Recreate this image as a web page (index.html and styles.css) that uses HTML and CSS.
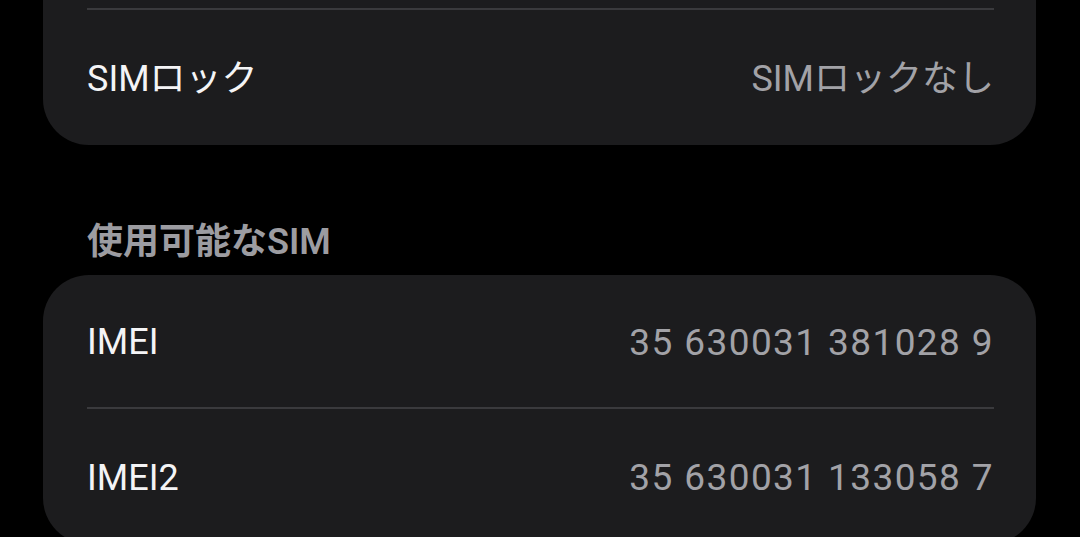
FILE: index.html
```html
<!DOCTYPE html>
<html>

<head>
    <title>SIM</title>
    <meta charset="utf-8" />
    <link rel="stylesheet" href="styles.css">
</head>

<body>
    <div class="page">
        <div class="card card-top">
            <div class="row row-split">
                <span class="label">SIMロック</span>
                <span class="value">SIMロックなし</span>
            </div>
        </div>

        <div class="section-title">使用可能なSIM</div>

        <div class="card">
            <div class="row">
                <span class="label">IMEI</span>
                <span class="value num">35 630031 381028 9</span>
            </div>
            <div class="row row-split">
                <span class="label">IMEI2</span>
                <span class="value num">35 630031 133058 7</span>
            </div>
        </div>
    </div>
</body>

</html>
```

FILE: styles.css
```css
body {
    margin: 0;
    padding: 0;
    background-color: #000;
    font-family: Roboto, "Noto Sans CJK JP", sans-serif;
    overflow: hidden;
}

.page {
    padding: 0 44px 0 43px;
}

.card {
    background-color: #1c1c1e;
    border-radius: 46px;
    padding: 0 42px 0 44px;
}

/* 上のカードは画面の外から続いている */
.card-top {
    border-radius: 0 0 46px 46px;
    padding-top: 8px;
}

.card-top .row-split {
    height: 129px;
    padding-top: 0;
    padding-bottom: 6px;
}

.row {
    display: flex;
    justify-content: space-between;
    align-items: center;
    height: 130px;
    padding-top: 2px;
}

.row-split {
    border-top: 2px solid #3a3a3d;
    height: 133px;
}

.label {
    color: #f4f4f6;
    font-size: 36px;
}

.value {
    color: #a2a2a7;
    font-size: 36px;
}

.num {
    font-size: 37px;
    letter-spacing: 1.4px;
}

.section-title {
    color: #9c9ca1;
    font-size: 36px;
    font-weight: 600;
    padding: 67px 44px 0 44px;
    height: 63px;
}
```
